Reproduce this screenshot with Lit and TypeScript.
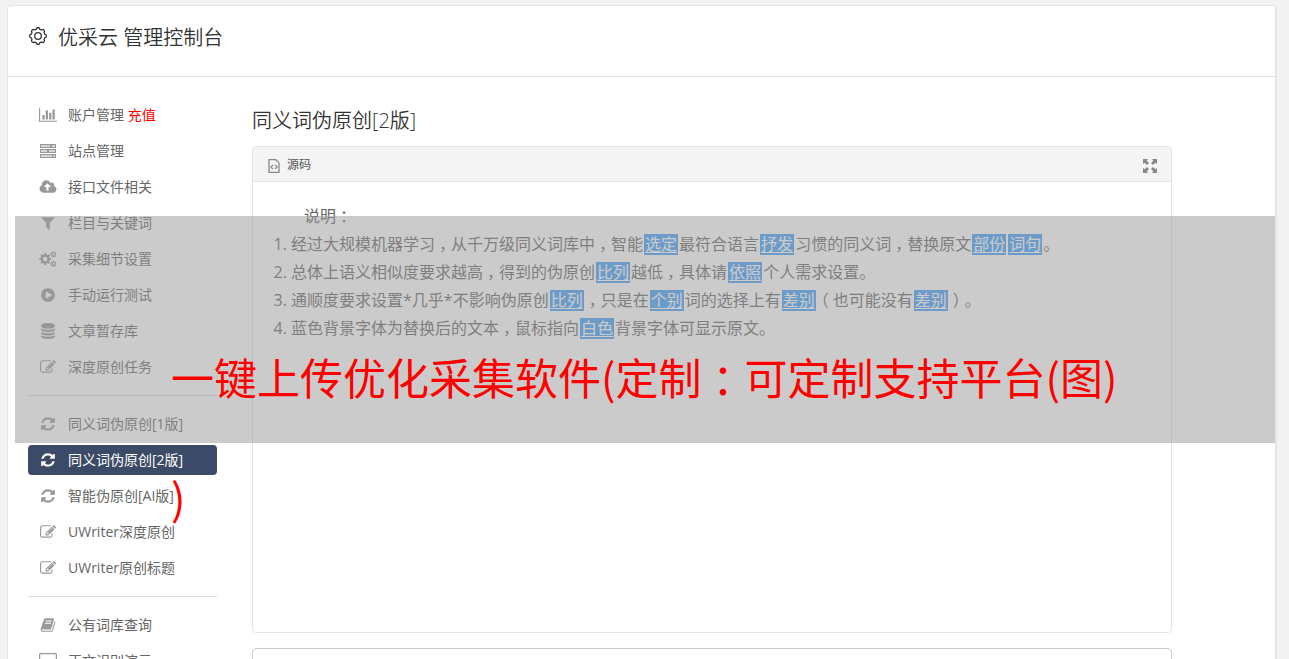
import { LitElement, html, css, svg, nothing } from "lit";
import { customElement } from "lit/decorators.js";
import { unsafeSVG } from "lit/directives/unsafe-svg.js";

/** Closed outline of a wheel whose rim swells `teeth` times. */
function scallop(cx: number, cy: number, r: number, depth: number, teeth: number): string {
  const points: string[] = [];
  for (let i = 0; i < 96; i++) {
    const a = (i / 96) * Math.PI * 2;
    const wave = Math.tanh(2.5 * Math.cos(a * teeth)) * depth;
    points.push(`${(cx + (r + wave) * Math.cos(a)).toFixed(2)} ${(cy + (r + wave) * Math.sin(a)).toFixed(2)}`);
  }
  return `M${points.join("L")}Z`;
}

/** Filled cog with a round hole in it. */
function cog(cx: number, cy: number, r: number, depth: number, hole: number): string {
  return `${scallop(cx, cy, r, depth, 8)}M${cx - hole} ${cy}a${hole} ${hole} 0 1 0 ${2 * hole} 0a${hole} ${hole} 0 1 0 ${-2 * hole} 0Z`;
}

interface Glyph {
  box: string;
  width: number;
  body: string;
}

const solid = (d: string, grid = 1792): Glyph => ({
  box: `0 0 ${grid} 1792`,
  width: grid === 2048 ? 18 : 16,
  body: `<path fill="currentColor" fill-rule="evenodd" d="${d}"/>`,
});

const GLYPHS: Record<string, Glyph> = {
  chart: solid("M640 896v512h-256v-512h256zm384-512v1024h-256v-1024h256zm1024 1152v128h-2048v-1536h128v1408h1920zm-640-896v768h-256v-768h256zm384-384v1152h-256v-1152h256z", 2048),
  server: {
    box: "0 0 18 16",
    width: 18,
    body: `<path fill="currentColor" fill-opacity=".4" d="M1 1h16v4H1zM1 6h16v4H1zM1 11h16v4H1z"/><path fill="currentColor" fill-rule="evenodd" d="M1 1h16v4H1zM2 2v2h14V2zM1 6h16v4H1zM2 7v2h14V7zM1 11h16v4H1zM2 12v2h14v-2zM11 2h2v2h-2zM8 7h2v2H8zM13 12h1v2h-1z"/>`,
  },
  upload: solid("M1344 864q0-14-9-23l-352-352q-9-9-23-9t-23 9l-351 351q-10 12-10 24 0 14 9 23t23 9h224v352q0 13 9.5 22.5t22.5 9.5h192q13 0 22.5-9.5t9.5-22.5v-352h224q13 0 22.5-9.5t9.5-22.5zm640 288q0 159-112.5 271.5t-271.5 112.5h-1088q-185 0-316.5-131.5t-131.5-316.5q0-130 70-240t188-165q-2-30-2-43 0-212 150-362t362-150q156 0 285.5 87t188.5 231q71-62 166-62 106 0 181 75t75 181q0 76-41 138 130 31 213.5 135.5t83.5 238.5z", 2048),
  filter: solid("M1595 295q17 41-14 70l-493 493v742q0 42-39 59-13 5-25 5-27 0-45-19l-256-256q-19-19-19-45v-486l-493-493q-31-29-14-70 17-39 59-39h1280q42 0 59 39z"),
  cogs: {
    box: "0 0 18 16",
    width: 18,
    body: `<path fill="currentColor" fill-rule="evenodd" d="${cog(6.2, 8, 5.3, 0.8, 2.2)}${cog(14.4, 3.4, 2.7, 0.5, 1.1)}${cog(14.4, 12.8, 2.7, 0.5, 1.1)}"/>`,
  },
  play: solid("M896 128q209 0 385.5 103t279.5 279.5 103 385.5-103 385.5-279.5 279.5-385.5 103-385.5-103-279.5-279.5-103-385.5 103-385.5 279.5-279.5 385.5-103zm384 823q32-18 32-55t-32-55l-544-320q-31-19-64-1-32 19-32 56v640q0 37 32 56 16 8 32 8 17 0 32-9z"),
  database: solid("M896 768q237 0 443-43t325-127v170q0 69-103 128t-280 93.5-385 34.5-385-34.5-280-93.5-103-128v-170q119 84 325 127t443 43zm0 768q237 0 443-43t325-127v170q0 69-103 128t-280 93.5-385 34.5-385-34.5-280-93.5-103-128v-170q119 84 325 127t443 43zm0-384q237 0 443-43t325-127v170q0 69-103 128t-280 93.5-385 34.5-385-34.5-280-93.5-103-128v-170q119 84 325 127t443 43zm0-1152q208 0 385 34.5t280 93.5 103 128v128q0 69-103 128t-280 93.5-385 34.5-385-34.5-280-93.5-103-128v-128q0-69 103-128t280-93.5 385-34.5z"),
  edit: solid("M888 1184l116-116-152-152-116 116v56h96v96h56zm440-720q-16-16-33 1l-350 350q-17 17-1 33t33-1l350-350q17-17 1-33zm80 594v190q0 119-84.5 203.5t-203.5 84.5h-832q-119 0-203.5-84.5t-84.5-203.5v-832q0-119 84.5-203.5t203.5-84.5h832q63 0 117 25 15 7 18 23 3 17-9 29l-49 49q-14 14-32 8-23-6-45-6h-832q-66 0-113 47t-47 113v832q0 66 47 113t113 47h832q66 0 113-47t47-113v-126q0-13 9-22l64-64q15-15 35-7t20 29zm-96-738l288 288-672 672h-288v-288zm444 132l-92 92-288-288 92-92q28-28 68-28t68 28l152 152q28 28 28 68t-28 68z"),
  refresh: solid("M1639 1056q0 5-1 7-64 268-268 434.5t-478 166.5q-146 0-282.5-55t-243.5-157l-129 129q-19 19-45 19t-45-19-19-45v-448q0-26 19-45t45-19h448q26 0 45 19t19 45-19 45l-137 137q71 66 161 102t187 36q134 0 250-65t186-179q11-17 53-117 8-23 30-23h192q13 0 22.5 9.5t9.5 22.5zm25-800v448q0 26-19 45t-45 19h-448q-26 0-45-19t-19-45 19-45l138-138q-148-137-349-137-134 0-250 65t-186 179q-11 17-53 117-8 23-30 23h-199q-13 0-22.5-9.5t-9.5-22.5v-7q65-268 270-434.5t480-166.5q146 0 284 55.5t245 156.5l130-129q19-19 45-19t45 19 19 45z"),
  book: solid("M1703 478q40 57 18 129l-275 906q-19 64-76.5 107.5t-122.5 43.5h-923q-77 0-148.5-53.5t-99.5-131.5q-24-67-2-127 0-4 3-27t4-37q1-8-3-21.5t-3-19.5q2-11 8-21t16.5-23.5 16.5-23.5q23-38 45-91.5t30-91.5q3-10 .5-30t-.5-28q3-11 17-28t17-23q21-36 42-92t25-90q1-9-2.5-32t.5-28q4-13 22-30.5t22-22.5q19-26 42.5-84.5t27.5-96.5q1-8-3-25.5t-2-26.5q2-8 9-18t18-23 17-21q8-12 16.5-30.5t15-35 16-36 19.5-32 26.5-23.5 36-11.5 47.5 5.5l-1 3q38-9 51-9h761q74 0 114 56t18 130l-274 906q-36 119-71.5 153.5t-128.5 34.5h-869q-27 0-38 15-11 16-1 43 24 70 144 70h923q29 0 56-15.5t35-41.5l300-987q7-22 5-57 38 15 59 43zm-1064 2q-4 13 2 22.5t20 9.5h608q13 0 25.5-9.5t16.5-22.5l21-64q4-13-2-22.5t-20-9.5h-608q-13 0-25.5 9.5t-16.5 22.5zm-83 256q-4 13 2 22.5t20 9.5h608q13 0 25.5-9.5t16.5-22.5l21-64q4-13-2-22.5t-20-9.5h-608q-13 0-25.5 9.5t-16.5 22.5z"),
  screen: {
    box: "0 0 18 16",
    width: 18,
    body: `<path fill="none" stroke="currentColor" stroke-width="1.2" d="M1.500 .6h15q.9 0 .9.900v10q0 .9-.9.900h-15q-.9 0-.9-.900v-10q0-.9.900-.900zM6 15h6"/>`,
  },
  gear: {
    box: "0 0 20 20",
    width: 20,
    body: `<g fill="none" stroke="currentColor" stroke-width="1.3"><path d="${scallop(10, 10, 7.6, 0.7, 8)}"/><circle cx="10" cy="10" r="3.300"/></g>`,
  },
  code: {
    box: "0 0 12 14",
    width: 12,
    body: `<g fill="none" stroke="currentColor" stroke-width="1.3"><path d="M1 .7h6.800L11 3.900v9.400H1z"/><path d="M5 5.900L3 8l2 2.100M7 5.900L9 8l-2 2.100"/></g>`,
  },
  expand: {
    box: "0 0 14 14",
    width: 14,
    body: `<path fill="currentColor" d="M0 0h5L3.700 1.700 6 4 4 6 1.700 3.700 0 5zM14 0v5l-1.700-1.300L10 6 8 4l2.300-2.300L9 0zM0 14V9l1.700 1.300L4 8l2 2-2.300 2.300L5 14zM14 14H9l1.300-1.700L8 10l2-2 2.300 2.300L14 9z"/>`,
  },
};

function glyph(name: string) {
  const g = GLYPHS[name];
  const height = name === "gear" ? 20 : name === "code" || name === "expand" ? 14 : 16;
  return html`<svg class="glyph" width=${g.width} height=${height} viewBox=${g.box} aria-hidden="true">${svg`${unsafeSVG(g.body)}`}</svg>`;
}

/** Centres full-width commas, colons and brackets in their cell. */
function prose(text: string) {
  return text.split(/([，：（）])/).map((part) => (/^[，：（）]$/.test(part) ? html`<span class="mid">${part}</span>` : part));
}

/** Splits on braces: words inside {} are the replaced ones. */
function marked(text: string) {
  return text.split(/(\{[^}]+\})/).map((part) => (part.startsWith("{") ? html`<u class="swap">${part.slice(1, -1)}</u>` : prose(part)));
}

interface Entry {
  icon: string;
  label: string;
  extra?: string;
  active?: boolean;
}

const MENU: Entry[][] = [
  [
    { icon: "chart", label: "账户管理", extra: "充值" },
    { icon: "server", label: "站点管理" },
    { icon: "upload", label: "接口文件相关" },
    { icon: "filter", label: "栏目与关键词" },
    { icon: "cogs", label: "采集细节设置" },
    { icon: "play", label: "手动运行测试" },
    { icon: "database", label: "文章暂存库" },
    { icon: "edit", label: "深度原创任务" },
  ],
  [
    { icon: "refresh", label: "同义词伪原创[1版]" },
    { icon: "refresh", label: "同义词伪原创[2版]", active: true },
    { icon: "refresh", label: "智能伪原创[AI版]" },
    { icon: "edit", label: "UWriter深度原创" },
    { icon: "edit", label: "UWriter原创标题" },
  ],
  [
    { icon: "book", label: "公有词库查询" },
    { icon: "screen", label: "正文识别演示" },
  ],
];

const NOTES = [
  "经过大规模机器学习，从千万级同义词库中，智能{选定}最符合语言{抒发}习惯的同义词，替换原文{部份}{词句}。",
  "总体上语义相似度要求越高，得到的伪原创{比列}越低，具体请{依照}个人需求设置。",
  "通顺度要求设置*几乎*不影响伪原创{比列}，只是在{个别}词的选择上有{差别}（也可能没有{差别}）。",
  "蓝色背景字体为替换后的文本，鼠标指向{白色}背景字体可显示原文。",
];

@customElement("app-root")
export class AppRoot extends LitElement {
  static styles = css`
    :host {
      display: block;
      position: relative;
      box-sizing: border-box;
      height: 100vh;
      overflow: hidden;
      padding: 5px 12px 0 7px;
      background: #f2f2f2;
      color: #666;
      font-family: "Open Sans", "Noto Sans CJK SC", sans-serif;
      font-size: 14px;
      font-weight: 400;
      text-spacing-trim: space-all;
    }
    *,
    *::before {
      box-sizing: border-box;
    }
    .mid {
      padding: 0 0.25em;
      font-feature-settings: "halt";
    }
    .glyph {
      display: block;
      flex: none;
    }
    .card {
      min-height: 100%;
      border: 1px solid #e5e5e5;
      border-right-width: 2px;
      border-radius: 4px 4px 0 0;
      background: #fff;
    }
    .top {
      display: flex;
      align-items: flex-start;
      gap: 10px;
      height: 71px;
      padding: 17px 20px;
      border-bottom: 1px solid #e5e5e5;
      color: #333;
    }
    .top .glyph {
      margin-top: 3px;
    }
    h1,
    h2 {
      margin: 0;
      color: #333;
      font-size: 20px;
      font-weight: 350;
      line-height: 30px;
    }
    .columns {
      display: flex;
      gap: 35px;
      padding: 23px 103px 0 20px;
    }
    .side {
      flex: none;
      width: 189px;
    }
    .group {
      display: flex;
      flex-direction: column;
      gap: 6px;
      margin: 0;
      padding: 0;
      list-style: none;
    }
    .group + .group {
      margin-top: 13px;
      padding-top: 13px;
      border-top: 1px solid #ddd;
    }
    .entry {
      display: flex;
      align-items: center;
      gap: 10px;
      height: 30px;
      padding: 0 10px;
      border-radius: 4px;
      color: #666;
      line-height: 30px;
      text-decoration: none;
      white-space: nowrap;
    }
    .entry .icon {
      display: flex;
      justify-content: center;
      width: 20px;
      color: #999;
    }
    .entry.active,
    .entry.active .icon {
      color: #fff;
    }
    .entry.active {
      background: #3b4a66;
    }
    .extra {
      color: #f00;
    }
    .main {
      flex: 1;
      min-width: 0;
      padding-top: 6px;
    }
    .panel {
      margin-top: 10px;
      border: 1px solid #e5e5e5;
      border-radius: 4px;
    }
    .bar {
      display: flex;
      align-items: center;
      gap: 7px;
      height: 35px;
      padding: 0 14px 0 15px;
      border-bottom: 1px solid #e5e5e5;
      border-radius: 4px 4px 0 0;
      background: #f4f4f4;
      color: #555;
      font-size: 12px;
    }
    .bar .glyph {
      margin-top: 3px;
      color: #888;
    }
    .full {
      margin-left: auto;
      padding: 0;
      border: 0;
      background: none;
    }
    .body {
      min-height: 450px;
      padding: 20px;
      font-size: 16px;
      line-height: 28px;
    }
    .body p {
      margin: 0;
      padding-left: 31px;
    }
    .notes {
      margin: 0;
      padding-left: 18px;
    }
    .swap {
      margin: 0 1px;
      padding: 0 1px;
      background: linear-gradient(#419ff9, #419ff9) center / 100% 21px no-repeat;
      color: #fff;
      text-underline-offset: 2px;
    }
    .source {
      display: block;
      width: 100%;
      height: 200px;
      margin-top: 15px;
      border: 1px solid #ccc;
      border-radius: 4px;
      resize: none;
      font: inherit;
    }
    .banner {
      position: absolute;
      top: 216px;
      left: 15px;
      right: 14px;
      height: 227px;
      padding: 100px 0 0 156px;
      background: rgba(151, 151, 151, 0.5);
      color: #f00;
      font-family: "Noto Sans CJK SC", sans-serif;
      font-size: 43px;
      font-weight: 400;
      line-height: 120px;
      white-space: nowrap;
      pointer-events: none;
    }
  `;

  render() {
    return html`
      <div class="card">
        <header class="top">${glyph("gear")}<h1>优采云 管理控制台</h1></header>
        <div class="columns">
          <nav class="side">
            ${MENU.map(
              (group) => html`<ul class="group">
                ${group.map(
                  (e) => html`<li>
                    <a class="entry ${e.active ? "active" : ""}" href="#"><span class="icon">${glyph(e.icon)}</span><span>${e.label}${e.extra ? html` <span class="extra">${e.extra}</span>` : nothing}</span></a>
                  </li>`
                )}
              </ul>`
            )}
          </nav>
          <main class="main">
            <h2>同义词伪原创[2版]</h2>
            <section class="panel">
              <div class="bar">
                ${glyph("code")}<span>源码</span>
                <button class="full" type="button" aria-label="全屏">${glyph("expand")}</button>
              </div>
              <div class="body">
                <p>${prose("说明：")}</p>
                <ol class="notes">
                  ${NOTES.map((n) => html`<li>${marked(n)}</li>`)}
                </ol>
              </div>
            </section>
            <textarea class="source" aria-label="原文"></textarea>
          </main>
        </div>
      </div>
      <div class="banner">${prose("一键上传优化采集软件(定制：可定制支持平台(图)")}<br />)</div>
    `;
  }
}
